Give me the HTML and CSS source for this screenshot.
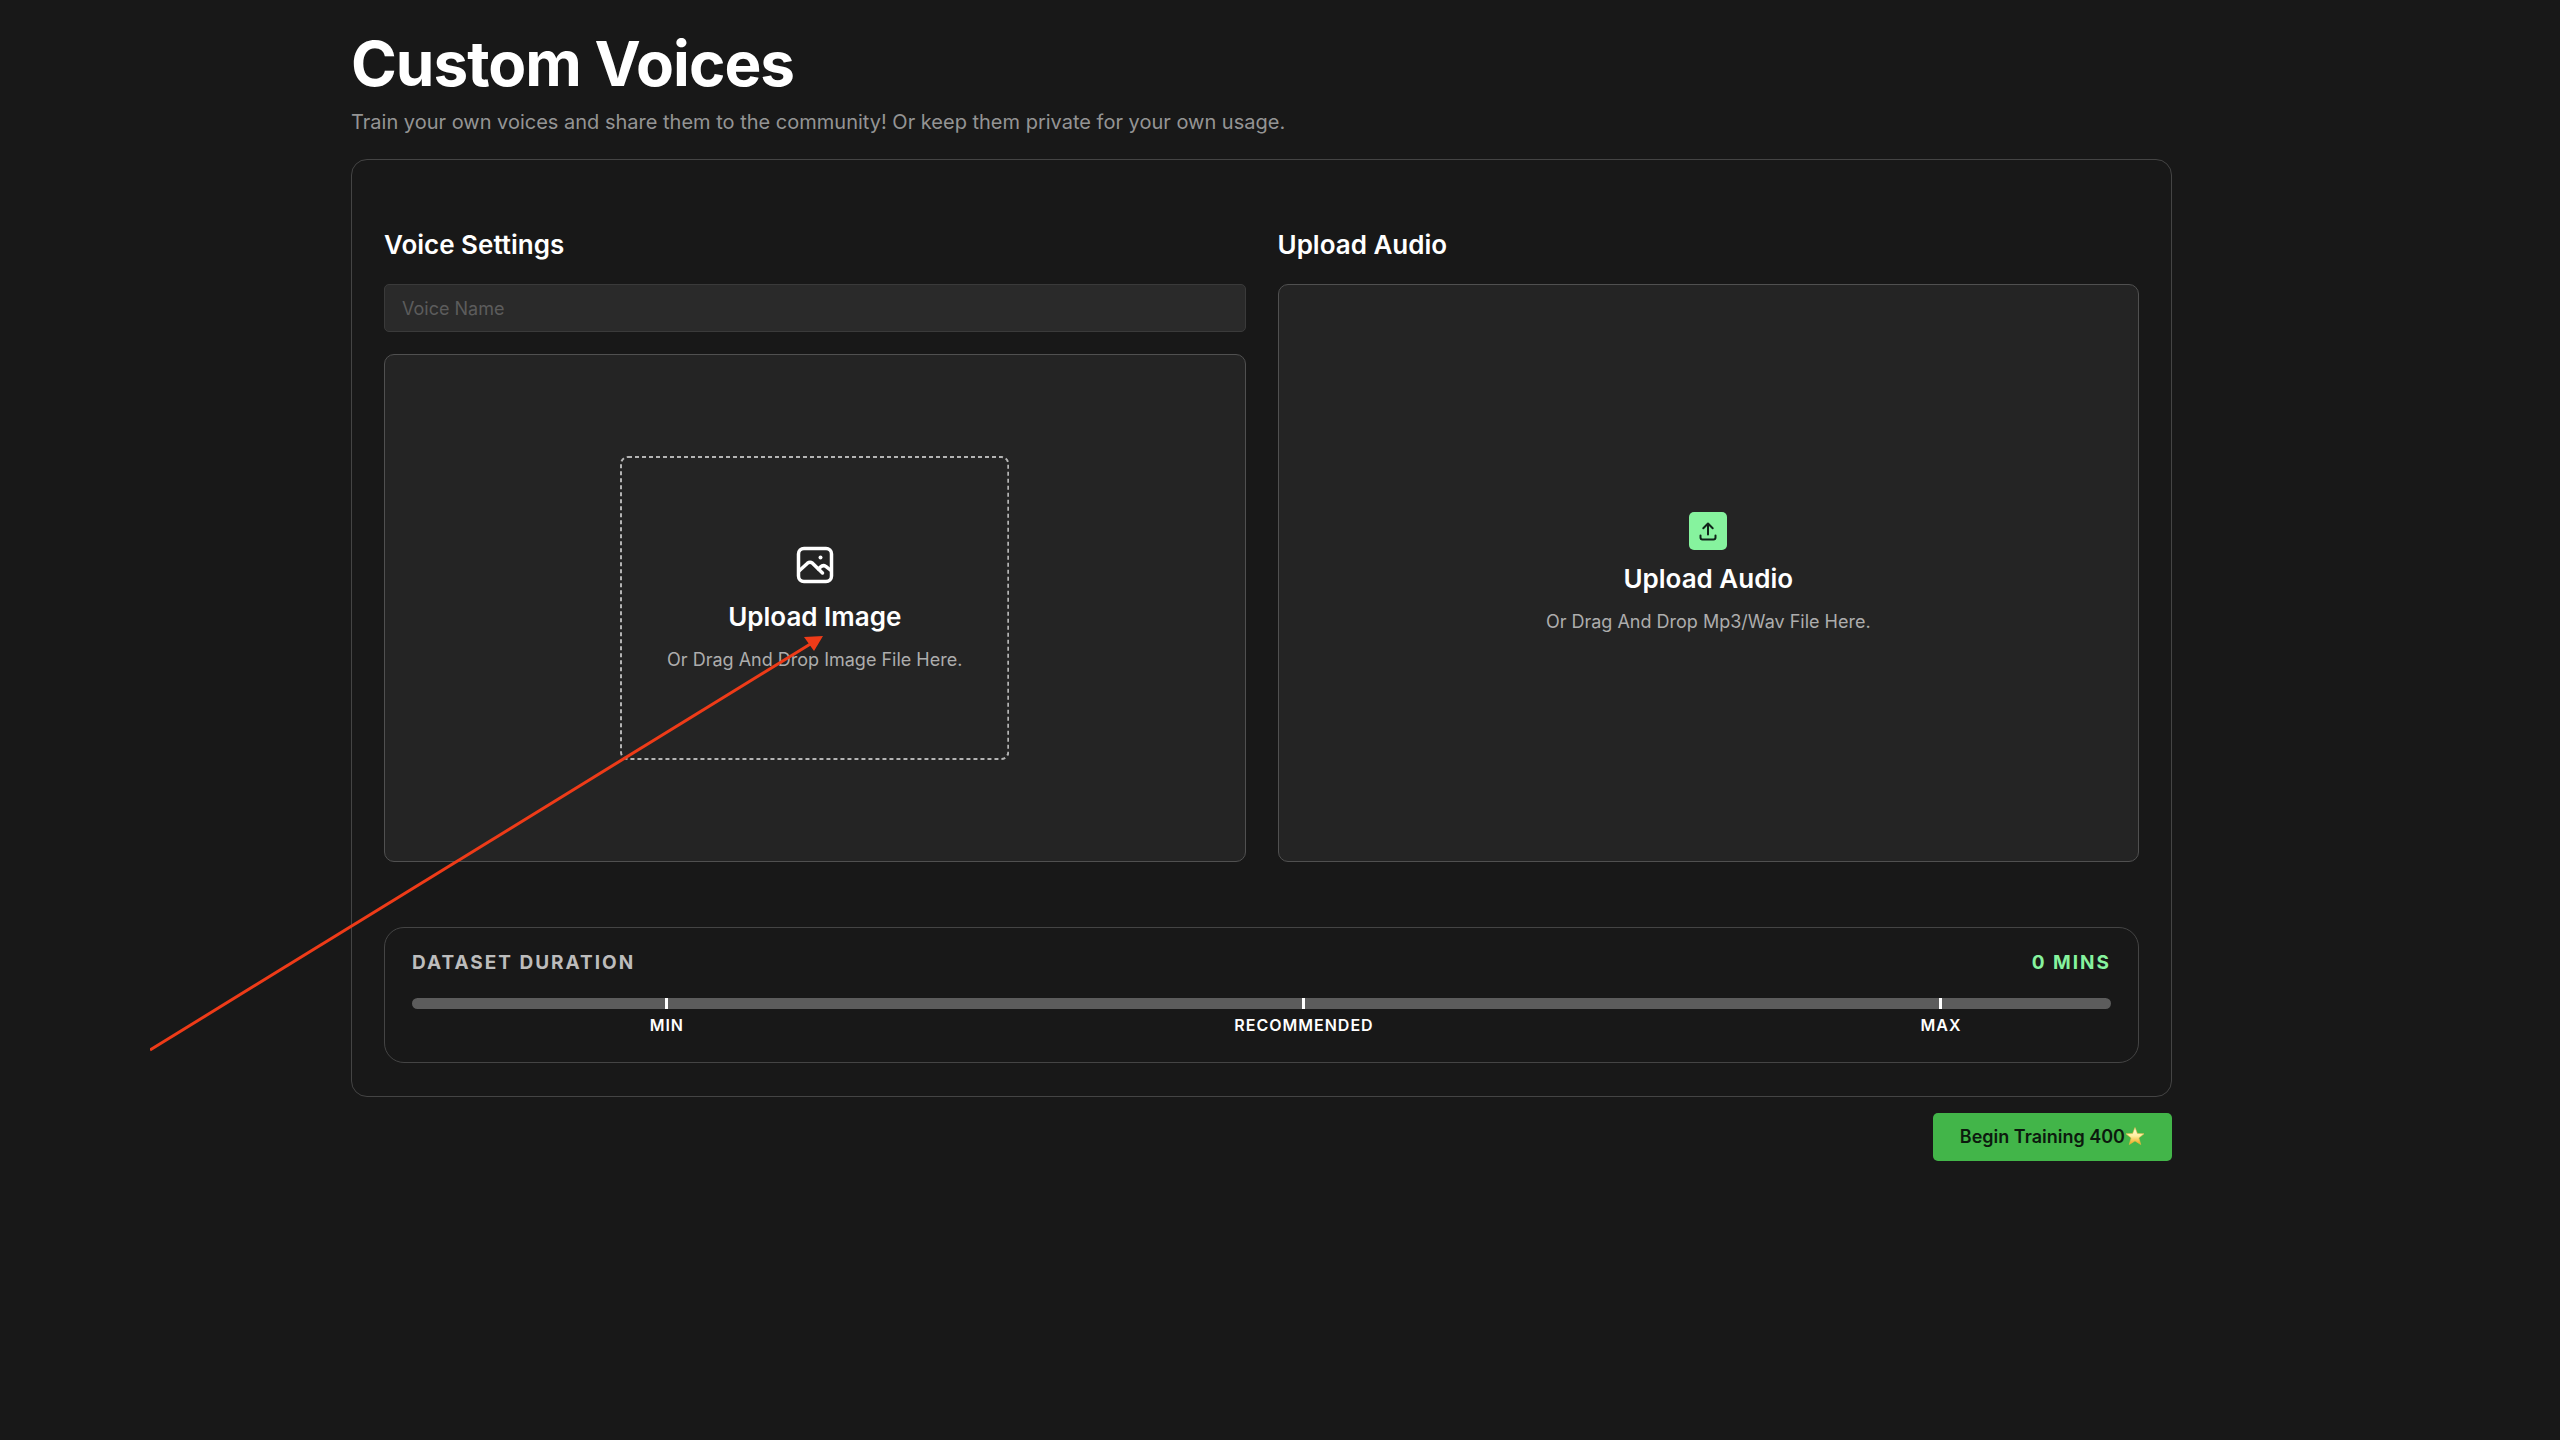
FILE: index.html
```html
<!DOCTYPE html>
<html lang="en">
<head>
<meta charset="utf-8">
<meta name="viewport" content="width=device-width, initial-scale=1">
<title>Custom Voices</title>
<link rel="stylesheet" href="styles.css">
</head>
<body>
<main class="page">
  <h1 class="title">Custom Voices</h1>
  <p class="subtitle">Train your own voices and share them to the community! Or keep them private for your own usage.</p>

  <form class="form">
    <div class="panel">
      <div class="columns">
        <section class="column">
          <h2 class="heading" id="voice-settings">Voice Settings</h2>
          <input class="field" type="text" placeholder="Voice Name" aria-labelledby="voice-settings">
          <div class="card">
            <label class="upload upload-dashed">
              <svg class="dashes" aria-hidden="true"><rect x="1" y="1" rx="7"/></svg>
              <input class="file" type="file" accept="image/*">
              <svg class="image-icon" viewBox="0 0 46 46" fill="none" stroke="currentColor" stroke-width="3.500" stroke-linecap="round" stroke-linejoin="round" aria-hidden="true">
                <rect x="6.500" y="6.500" width="33" height="33" rx="5.500"/>
                <path d="M7 29 L15.500 21.200 Q18 19.200 20.500 21.200 L30.500 31"/>
                <path d="M26.500 27 L28.500 25 Q31 22.600 33.800 24.400 L39 28.500"/>
                <circle cx="28.500" cy="15.500" r="2" fill="currentColor" stroke="none"/>
              </svg>
              <span class="heading">Upload Image</span>
              <span class="hint">Or Drag And Drop Image File Here.</span>
            </label>
          </div>
        </section>

        <section class="column">
          <h2 class="heading">Upload Audio</h2>
          <div class="card">
            <label class="upload upload-plain">
              <input class="file" type="file" accept="audio/mpeg,audio/wav">
              <svg class="audio-icon" viewBox="0 0 38 38" fill="none" stroke="currentColor" stroke-width="2" stroke-linecap="round" stroke-linejoin="round" aria-hidden="true">
                <path d="M11.500 23.500 V25.500 Q11.500 27.500 13.500 27.500 H24.500 Q26.500 27.500 26.500 25.500 V23.500"/>
                <path d="M19 22.500 V11.800 M14.300 16.200 L19 11.500 L23.700 16.200"/>
              </svg>
              <span class="heading">Upload Audio</span>
              <span class="hint">Or Drag And Drop Mp3/Wav File Here.</span>
            </label>
          </div>
        </section>
      </div>

      <section class="duration">
        <div class="duration-head">
          <label for="duration">DATASET DURATION</label>
          <span class="duration-value">0 MINS</span>
        </div>
        <div class="track">
          <progress class="bar" id="duration" value="0" max="100"></progress>
          <span class="tick" style="left: 15%"></span>
          <span class="tick" style="left: 52.5%"></span>
          <span class="tick" style="left: 90%"></span>
        </div>
        <div class="marks">
          <span>MIN</span>
          <span>RECOMMENDED</span>
          <span>MAX</span>
        </div>
      </section>
    </div>

    <button class="submit" type="button">Begin Training 400<svg class="star" viewBox="0 0 20 20" aria-hidden="true">
      <defs>
        <linearGradient id="gold" x1="0" y1="0" x2="0" y2="1">
          <stop offset="0" stop-color="#fffbe0"/>
          <stop offset="0.500" stop-color="#fdf0a0"/>
          <stop offset="1" stop-color="#f0a010"/>
        </linearGradient>
      </defs>
      <path fill="url(#gold)" stroke="#e8bc48" stroke-width="0.600" stroke-linejoin="round" d="M10 0.500 L12.400 6.500 L19 6.800 L13.900 10.900 L15.700 17.500 L10 13.900 L4.300 17.500 L6.100 10.900 L1 6.800 L7.600 6.500 Z"/>
    </svg></button>
  </form>

  <svg class="arrow" viewBox="0 0 680 420" aria-hidden="true">
    <line x1="0" y1="418" x2="662" y2="11"/>
    <path d="M673 4 L654 5 L664 19 Z"/>
  </svg>
</main>
</body>
</html>
```

FILE: styles.css
```css
* {
  box-sizing: border-box;
}

body {
  margin: 0;
  background: #181818;
  color: #fff;
  font-family: Inter, "Liberation Sans", sans-serif;
}

.page {
  position: relative;
  padding: 32px 388px 32px 351px;
}

.title {
  margin: 0 0 12px;
  font-size: 62px;
  line-height: 64px;
  font-weight: 700;
  letter-spacing: -1px;
}

.subtitle {
  margin: 0 0 23px;
  font-size: 20px;
  line-height: 28px;
  color: #949494;
}

.form {
  display: flex;
  flex-direction: column;
  gap: 16px;
}

.panel {
  display: flex;
  flex-direction: column;
  gap: 65px;
  padding: 69px 32px 33px;
  border: 1px solid #444;
  border-radius: 16px;
}

.columns {
  display: grid;
  grid-template-columns: 1fr 1fr;
  gap: 32px;
}

.column {
  display: flex;
  flex-direction: column;
}

.heading {
  margin: 0;
  font-size: 26px;
  line-height: 32px;
  font-weight: 600;
}

.column > .heading {
  margin-bottom: 23px;
}

.field {
  width: 100%;
  height: 48px;
  margin-bottom: 22px;
  padding: 0 17px;
  border: 1px solid #3a3a3a;
  border-radius: 5px;
  background: #2a2a2a;
  color: #fff;
  font: 400 18px/24px Inter, "Liberation Sans", sans-serif;
}

.field::placeholder {
  color: #5c5c5c;
}

.card {
  flex: 1;
  display: flex;
  align-items: center;
  justify-content: center;
  min-height: 508px;
  border: 1px solid #505050;
  border-radius: 10px;
  background: #242424;
}

.upload {
  position: relative;
  display: flex;
  flex-direction: column;
  align-items: center;
  gap: 13px;
  cursor: pointer;
}

.upload-dashed {
  padding: 86px 47px;
}

.upload-plain {
  padding-top: 2px;
}

.dashes {
  position: absolute;
  inset: 0;
  width: 100%;
  height: 100%;
}

.dashes rect {
  width: calc(100% - 2px);
  height: calc(100% - 2px);
  fill: none;
  stroke: #b4b4b4;
  stroke-width: 2;
  stroke-dasharray: 4 3;
}

.file {
  position: absolute;
  width: 1px;
  height: 1px;
  opacity: 0;
}

.hint {
  font-size: 18px;
  line-height: 28px;
  color: #adadad;
}

.image-icon {
  width: 46px;
  height: 46px;
}

.audio-icon {
  width: 38px;
  height: 38px;
  border-radius: 5px;
  background: #86f39e;
  color: #10241a;
}

.duration {
  padding: 23px 27px 27px;
  border: 1px solid #444;
  border-radius: 20px;
}

.duration-head {
  display: flex;
  justify-content: space-between;
  margin-bottom: 23px;
  font-size: 19px;
  line-height: 24px;
  font-weight: 700;
  letter-spacing: 2px;
  color: #bcbcbc;
}

.duration-value {
  color: #86f39e;
}

.track {
  position: relative;
  height: 11px;
}

.bar {
  display: block;
  width: 100%;
  height: 11px;
  appearance: none;
  border: 0;
  border-radius: 6px;
  overflow: hidden;
  background: #5c5c5c;
}

.bar::-webkit-progress-bar {
  background: #5c5c5c;
}

.bar::-webkit-progress-value {
  background: #86f39e;
}

.tick {
  position: absolute;
  top: 0;
  width: 3px;
  height: 11px;
  margin-left: -2px;
  background: #fff;
}

.marks {
  display: grid;
  grid-template-columns: 30% 45% 30%;
  justify-items: center;
  margin-top: 6px;
  font-size: 16px;
  line-height: 20px;
  font-weight: 600;
  letter-spacing: 1px;
}

.submit {
  display: flex;
  align-items: center;
  align-self: flex-end;
  height: 48px;
  padding: 0 27px;
  border: 0;
  border-radius: 5px;
  background: #42b549;
  color: #0c1a0e;
  font: 600 18px/24px Inter, "Liberation Sans", sans-serif;
  cursor: pointer;
}

.star {
  width: 20px;
  height: 20px;
}

.arrow {
  position: absolute;
  top: 632px;
  left: 150px;
  width: 680px;
  height: 420px;
  pointer-events: none;
}

.arrow line {
  stroke: #ee3b18;
  stroke-width: 3;
}

.arrow path {
  fill: #ee3b18;
}
```
